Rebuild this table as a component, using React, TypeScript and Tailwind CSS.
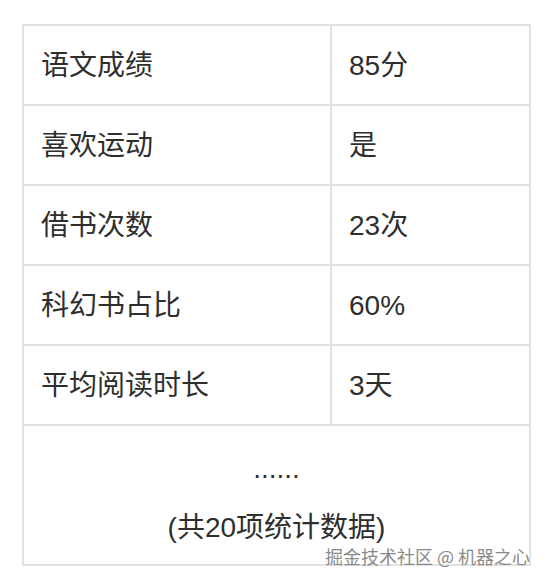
const rows: [string, string][] = [
  ["语文成绩", "85分"],
  ["喜欢运动", "是"],
  ["借书次数", "23次"],
  ["科幻书占比", "60%"],
  ["平均阅读时长", "3天"],
];

export default function App() {
  return (
    <div className="min-h-[582px] w-[550px] bg-white pl-[22px] pt-[24px] font-['Liberation_Sans','Noto_Sans_CJK_SC',sans-serif] text-[28px] text-[#2e2e2e]">
      <div className="relative w-[509px] border-2 border-[#e2e2e2]">
        {rows.map(([k, v]) => (
          <div key={k} className="grid h-[80px] grid-cols-[308px_1fr] border-b-2 border-[#e2e2e2]">
            <div className="flex items-center border-r-2 border-[#e2e2e2] pl-[17px] pt-[2px] leading-none">{k}</div>
            <div className="flex items-center pl-[17px] pt-[2px] leading-none">{v}</div>
          </div>
        ))}
        <div className="flex h-[138px] flex-col items-center pt-[29px] leading-none">
          <div className="h-[28px]">......</div>
          <div className="mt-[31px]">(共20项统计数据)</div>
        </div>
        <span className="absolute right-[-1px] top-[521px] whitespace-nowrap font-['Noto_Sans_CJK_SC',sans-serif] text-[18px] leading-none text-[#8a8a8a] [text-shadow:0_0_1px_#fff]">
          掘金技术社区 @ 机器之心
        </span>
      </div>
    </div>
  );
}
